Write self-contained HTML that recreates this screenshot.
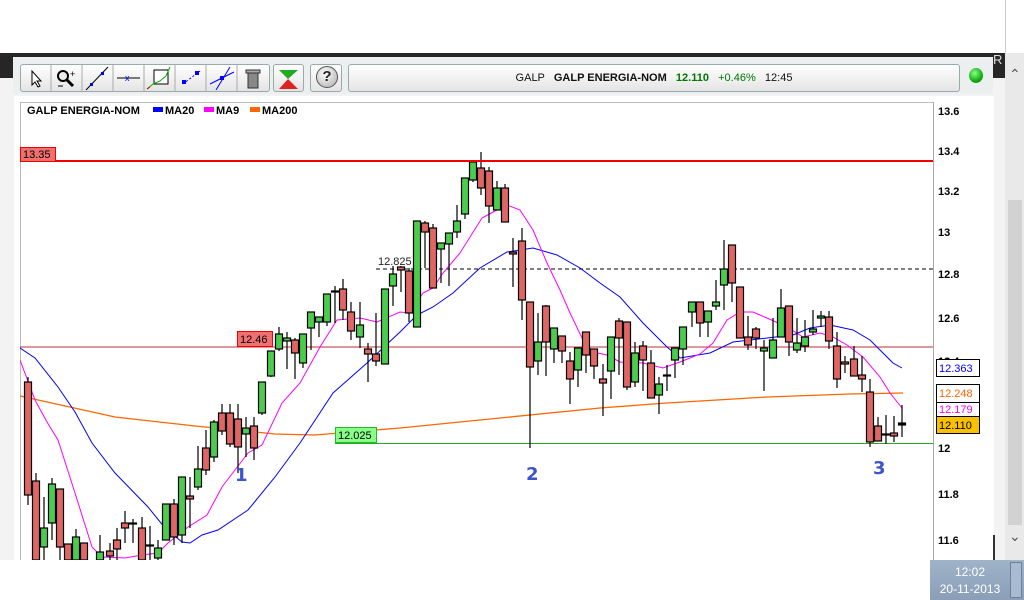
<!DOCTYPE html>
<html><head><meta charset="utf-8"><style>
*{margin:0;padding:0;box-sizing:border-box}
body{width:1024px;height:600px;overflow:hidden;background:#fff;position:relative;font-family:"Liberation Sans",sans-serif}
.abs{position:absolute}
.btn{position:absolute;top:64px;height:28px;background:linear-gradient(#fff,#e4e4e4);border:1px solid #9aa;border-radius:3px}
</style></head><body>
<div class="abs" style="left:1005px;top:0;width:19px;height:53px;background:#fff;border-left:1px solid #ccc"></div>
<div class="abs" style="left:0;top:53px;width:1005px;height:25px;background:#262626"></div>
<div class="abs" style="left:993px;top:52px;font-size:13px;color:#ddd">R</div>
<div class="abs" style="left:0;top:78px;width:1005px;height:482px;background:#f3f3f3"></div>
<div class="abs" style="left:1005px;top:53px;width:19px;height:507px;background:#e9e9e9"></div>
<div class="abs" style="left:1008px;top:200px;width:14px;height:325px;background:#d2d2d2"></div>
<div class="abs" style="left:1009px;top:66px;font-size:14px;color:#555">&#8963;</div>
<div class="abs" style="left:1009px;top:528px;font-size:14px;color:#555">&#8964;</div>
<div class="abs" style="left:13px;top:57px;width:980px;height:37px;background:#eceff0"></div>
<div class="btn" style="left:20px;width:250px;"></div>
<svg class="abs" style="left:20px;top:64px" width="250" height="28">
<g stroke="#aaa"><line x1="31" y1="1" x2="31" y2="27"/><line x1="62" y1="1" x2="62" y2="27"/><line x1="93" y1="1" x2="93" y2="27"/><line x1="124" y1="1" x2="124" y2="27"/><line x1="155" y1="1" x2="155" y2="27"/><line x1="186" y1="1" x2="186" y2="27"/><line x1="217" y1="1" x2="217" y2="27"/></g>
<path d="M12 7 L12 21 L15 18 L18 23 L20 22 L17 17 L21 17 Z" fill="#fff" stroke="#000"/>
<circle cx="43" cy="12" r="5" fill="#eee" stroke="#000" stroke-width="2"/><line x1="47" y1="16" x2="53" y2="22" stroke="#000" stroke-width="3"/><text x="50" y="13" font-size="9">+</text><line x1="38" y1="22" x2="43" y2="22" stroke="#000"/>
<line x1="66" y1="26" x2="88" y2="3" stroke="#000"/><rect x="70" y="19" width="3" height="3" fill="#00f"/><rect x="81" y="8" width="3" height="3" fill="#00f"/>
<line x1="97" y1="14" x2="120" y2="14" stroke="#000"/><text x="105" y="17" font-size="9" fill="#00f">x</text>
<rect x="134" y="6" width="14" height="14" fill="#fff" stroke="#000"/><path d="M127 25 L133 20 L140 17 L146 12 L150 3" stroke="#0a0" fill="none"/><path d="M127 25 L130 23" stroke="#d00"/>
<rect x="162" y="16" width="4" height="4" fill="#00f"/><rect x="175" y="7" width="4" height="4" fill="#00f"/><line x1="163" y1="20" x2="180" y2="7" stroke="#00f" stroke-dasharray="2 2"/>
<line x1="196" y1="26" x2="210" y2="3" stroke="#00f"/><line x1="190" y1="20" x2="214" y2="8" stroke="#00f"/><rect x="200" y="12" width="4" height="4" fill="#00f"/>
<rect x="228" y="9" width="10" height="15" fill="#888" stroke="#333"/><rect x="226" y="6" width="14" height="3" fill="#aaa" stroke="#333"/>
</svg>
<div class="btn" style="left:273px;width:31px"></div>
<svg class="abs" style="left:273px;top:64px" width="31" height="28"><path d="M6 6 L25 6 L15 15 Z" fill="#2a2"/><path d="M6 25 L25 25 L15 15 Z" fill="#d22"/></svg>
<div class="btn" style="left:310px;width:32px"></div>
<div class="abs" style="left:316px;top:66px;width:22px;height:22px;border-radius:50%;background:radial-gradient(circle at 40% 35%,#fff,#aaa);border:1px solid #555;font-size:15px;font-weight:bold;text-align:center;line-height:20px;color:#222">?</div>
<div class="btn" style="left:348px;width:612px;font-size:11px;text-align:center;line-height:26px;color:#111">GALP &nbsp; <b>GALP ENERGIA-NOM</b> &nbsp; <b style="color:#070">12.110</b> &nbsp; <span style="color:#070">+0.46%</span> &nbsp; 12:45</div>
<div class="abs" style="left:969px;top:68px;width:14px;height:15px;border-radius:50%;background:radial-gradient(circle at 40% 35%,#8f8,#1a1 60%,#070)"></div>
<div class="abs" style="left:14px;top:96px;width:980px;height:464px;background:#fff"></div>
<svg class="abs" style="left:0;top:0" width="1005" height="560">
<defs><clipPath id="c"><rect x="20" y="102" width="913" height="458"/></clipPath></defs>
<line x1="20.5" y1="102" x2="20.5" y2="560" stroke="#bbb"/><line x1="20" y1="102.5" x2="933" y2="102.5" stroke="#bbb"/><line x1="933.5" y1="102" x2="933.5" y2="560" stroke="#aaa"/>
<text x="27" y="114" font-size="11" font-weight="bold">GALP ENERGIA-NOM</text>
<rect x="153" y="107" width="10" height="5" fill="#00f"/><text x="165" y="114" font-size="11" font-weight="bold">MA20</text>
<rect x="204" y="107" width="10" height="5" fill="#f0f"/><text x="216" y="114" font-size="11" font-weight="bold">MA9</text>
<rect x="250" y="107" width="10" height="5" fill="#f60"/><text x="262" y="114" font-size="11" font-weight="bold">MA200</text>
<g font-size="11" font-weight="bold"><text x="938" y="115">13.6</text><text x="938" y="155">13.4</text><text x="938" y="195">13.2</text><text x="938" y="236">13</text><text x="938" y="278">12.8</text><text x="938" y="322">12.6</text><text x="938" y="365">12.4</text><text x="938" y="452">12</text><text x="938" y="498">11.8</text><text x="938" y="544">11.6</text></g>
<g clip-path="url(#c)">
<line x1="20" y1="347" x2="933" y2="347" stroke="#b33"/>
<line x1="376" y1="269" x2="933" y2="269" stroke="#000" stroke-dasharray="4 3"/>
<line x1="335" y1="443.5" x2="933" y2="443.5" stroke="#2a2"/>
<polyline fill="none" stroke="#f60" stroke-width="1.3" points="20,396 115,417 195,426 275,434 315,435 400,428 500,418 600,408 667,403 767,397 850,394 903,393"/>
<polyline fill="none" stroke="#00f" points="20,348 35,358 58,387 75,412 92,443 115,473 148,507 165,528 182,542 190,543 202,535 218,530 248,510 275,477 300,443 333,393 367,363 400,332 417,315 433,307 453,293 480,268 507,252 533,248 557,255 580,268 600,283 620,297 643,323 667,347 680,358 710,353 733,342 767,338 793,335 810,328 830,325 853,330 870,340 893,363 902,368"/>
<polyline fill="none" stroke="#f0f" points="20,360 35,400 47,422 58,440 75,493 92,547 102,557 125,558 142,555 158,553 168,543 188,527 207,515 222,487 248,453 262,445 282,403 300,383 320,347 337,320 360,318 377,322 400,312 410,313 423,293 433,288 443,273 460,253 482,218 493,212 507,205 520,210 533,230 547,263 560,290 570,313 583,340 593,352 607,355 620,362 643,363 663,368 680,362 700,354 713,343 727,320 740,312 753,312 767,318 787,327 803,337 820,333 833,337 847,345 863,357 880,377 890,393 902,408"/>
<g stroke="#000" stroke-width="1.2">
<line x1="28" y1="377" x2="28" y2="505"/><rect x="24.5" y="382" width="7" height="113" fill="#e06666"/>
<line x1="36" y1="473" x2="36" y2="560"/><rect x="32.5" y="481" width="7" height="79" fill="#e06666"/>
<line x1="44" y1="497" x2="44" y2="560"/><rect x="40.5" y="528" width="7" height="19" fill="#4ccc4c"/>
<line x1="52" y1="478" x2="52" y2="540"/><rect x="48.5" y="484" width="7" height="39" fill="#4ccc4c"/>
<line x1="60" y1="489" x2="60" y2="560"/><rect x="56.5" y="489" width="7" height="58" fill="#e06666"/>
<line x1="68" y1="544" x2="68" y2="560"/><rect x="64.5" y="544" width="7" height="16" fill="#e06666"/>
<line x1="76" y1="529" x2="76" y2="560"/><rect x="72.5" y="537" width="7" height="23" fill="#4ccc4c"/>
<line x1="84" y1="543" x2="84" y2="560"/><rect x="80.5" y="543" width="7" height="17" fill="#e06666"/>
<line x1="100" y1="535" x2="100" y2="560"/><rect x="96.5" y="552" width="7" height="8" fill="#4ccc4c"/>
<line x1="110" y1="543" x2="110" y2="560"/><rect x="106.5" y="551" width="7" height="5" fill="#e06666"/>
<line x1="117" y1="528" x2="117" y2="560"/><rect x="113.5" y="540" width="7" height="9" fill="#e06666"/>
<line x1="125" y1="511" x2="125" y2="543"/><rect x="121.5" y="523" width="7" height="5" fill="#e06666"/>
<line x1="133" y1="519" x2="133" y2="543"/><rect x="129.5" y="523" width="7" height="1" fill="#000"/>
<line x1="142" y1="517" x2="142" y2="560"/><rect x="138.5" y="528" width="7" height="32" fill="#e06666"/>
<line x1="150" y1="526" x2="150" y2="560"/><rect x="146.5" y="545" width="7" height="1" fill="#000"/>
<line x1="158" y1="540" x2="158" y2="560"/><rect x="154.5" y="548" width="7" height="10" fill="#4ccc4c"/>
<line x1="166" y1="504" x2="166" y2="540"/><rect x="162.5" y="504" width="7" height="36" fill="#4ccc4c"/>
<line x1="174" y1="499" x2="174" y2="545"/><rect x="170.5" y="504" width="7" height="33" fill="#e06666"/>
<line x1="182" y1="477" x2="182" y2="543"/><rect x="178.5" y="477" width="7" height="58" fill="#4ccc4c"/>
<line x1="190" y1="477" x2="190" y2="528"/><rect x="186.5" y="496" width="7" height="3" fill="#e06666"/>
<line x1="198" y1="446" x2="198" y2="490"/><rect x="194.5" y="469" width="7" height="18" fill="#4ccc4c"/>
<line x1="206" y1="430" x2="206" y2="475"/><rect x="202.5" y="448" width="7" height="22" fill="#e06666"/>
<line x1="214" y1="420" x2="214" y2="462"/><rect x="210.5" y="422" width="7" height="35" fill="#4ccc4c"/>
<line x1="222" y1="404" x2="222" y2="435"/><rect x="218.5" y="413" width="7" height="18" fill="#e06666"/>
<line x1="230" y1="404" x2="230" y2="447"/><rect x="226.5" y="413" width="7" height="31" fill="#e06666"/>
<line x1="238" y1="404" x2="238" y2="473"/><rect x="234.5" y="419" width="7" height="28" fill="#e06666"/>
<line x1="246" y1="417" x2="246" y2="457"/><rect x="242.5" y="428" width="7" height="6" fill="#4ccc4c"/>
<line x1="254" y1="417" x2="254" y2="460"/><rect x="250.5" y="426" width="7" height="22" fill="#e06666"/>
<line x1="262" y1="382" x2="262" y2="415"/><rect x="258.5" y="382" width="7" height="31" fill="#4ccc4c"/>
<line x1="271" y1="351" x2="271" y2="377"/><rect x="267.5" y="351" width="7" height="25" fill="#4ccc4c"/>
<line x1="279" y1="327" x2="279" y2="351"/><rect x="275.5" y="334" width="7" height="15" fill="#4ccc4c"/>
<line x1="287" y1="332" x2="287" y2="369"/><rect x="283.5" y="338" width="7" height="3" fill="#4ccc4c"/>
<line x1="295" y1="338" x2="295" y2="379"/><rect x="291.5" y="340" width="7" height="13" fill="#e06666"/>
<line x1="303" y1="334" x2="303" y2="368"/><rect x="299.5" y="334" width="7" height="29" fill="#4ccc4c"/>
<line x1="311" y1="312" x2="311" y2="350"/><rect x="307.5" y="312" width="7" height="16" fill="#4ccc4c"/>
<line x1="319" y1="317" x2="319" y2="337"/><rect x="315.5" y="317" width="7" height="5" fill="#4ccc4c"/>
<line x1="327" y1="294" x2="327" y2="326"/><rect x="323.5" y="294" width="7" height="28" fill="#4ccc4c"/>
<line x1="335" y1="286" x2="335" y2="323"/><rect x="331.5" y="291" width="7" height="1" fill="#000"/>
<line x1="343" y1="279" x2="343" y2="320"/><rect x="339.5" y="289" width="7" height="21" fill="#e06666"/>
<line x1="351" y1="302" x2="351" y2="340"/><rect x="347.5" y="312" width="7" height="19" fill="#e06666"/>
<line x1="360" y1="302" x2="360" y2="348"/><rect x="356.5" y="325" width="7" height="12" fill="#4ccc4c"/>
<line x1="368" y1="343" x2="368" y2="382"/><rect x="364.5" y="349" width="7" height="5" fill="#e06666"/>
<line x1="376" y1="313" x2="376" y2="366"/><rect x="372.5" y="354" width="7" height="7" fill="#e06666"/>
<line x1="385" y1="289" x2="385" y2="364"/><rect x="381.5" y="289" width="7" height="75" fill="#4ccc4c"/>
<line x1="393" y1="266" x2="393" y2="306"/><rect x="389.5" y="274" width="7" height="12" fill="#4ccc4c"/>
<line x1="401" y1="266" x2="401" y2="292"/><rect x="397.5" y="267" width="7" height="3" fill="#e06666"/>
<line x1="409" y1="268" x2="409" y2="322"/><rect x="405.5" y="271" width="7" height="42" fill="#e06666"/>
<line x1="417" y1="221" x2="417" y2="327"/><rect x="413.5" y="221" width="7" height="106" fill="#4ccc4c"/>
<line x1="425" y1="221" x2="425" y2="268"/><rect x="421.5" y="223" width="7" height="9" fill="#e06666"/>
<line x1="433" y1="224" x2="433" y2="288"/><rect x="429.5" y="228" width="7" height="60" fill="#e06666"/>
<line x1="441" y1="243" x2="441" y2="283"/><rect x="437.5" y="243" width="7" height="6" fill="#4ccc4c"/>
<line x1="449" y1="233" x2="449" y2="286"/><rect x="445.5" y="233" width="7" height="11" fill="#4ccc4c"/>
<line x1="457" y1="205" x2="457" y2="238"/><rect x="453.5" y="221" width="7" height="11" fill="#4ccc4c"/>
<line x1="465" y1="178" x2="465" y2="219"/><rect x="461.5" y="178" width="7" height="36" fill="#4ccc4c"/>
<line x1="473" y1="162" x2="473" y2="182"/><rect x="469.5" y="162" width="7" height="18" fill="#4ccc4c"/>
<line x1="481" y1="152" x2="481" y2="195"/><rect x="477.5" y="168" width="7" height="20" fill="#e06666"/>
<line x1="489" y1="167" x2="489" y2="223"/><rect x="485.5" y="171" width="7" height="35" fill="#e06666"/>
<line x1="497" y1="181" x2="497" y2="210"/><rect x="493.5" y="188" width="7" height="22" fill="#4ccc4c"/>
<line x1="505" y1="184" x2="505" y2="222"/><rect x="501.5" y="188" width="7" height="34" fill="#e06666"/>
<line x1="513" y1="238" x2="513" y2="287"/><rect x="509.5" y="252" width="7" height="2" fill="#e06666"/>
<line x1="522" y1="228" x2="522" y2="320"/><rect x="518.5" y="241" width="7" height="59" fill="#e06666"/>
<line x1="530" y1="302" x2="530" y2="448"/><rect x="526.5" y="302" width="7" height="65" fill="#e06666"/>
<line x1="538" y1="313" x2="538" y2="375"/><rect x="534.5" y="342" width="7" height="19" fill="#4ccc4c"/>
<line x1="546" y1="305" x2="546" y2="376"/><rect x="542.5" y="306" width="7" height="36" fill="#e06666"/>
<line x1="554" y1="328" x2="554" y2="363"/><rect x="550.5" y="328" width="7" height="21" fill="#4ccc4c"/>
<line x1="562" y1="336" x2="562" y2="363"/><rect x="558.5" y="336" width="7" height="15" fill="#e06666"/>
<line x1="570" y1="352" x2="570" y2="404"/><rect x="566.5" y="361" width="7" height="18" fill="#e06666"/>
<line x1="578" y1="348" x2="578" y2="387"/><rect x="574.5" y="348" width="7" height="22" fill="#4ccc4c"/>
<line x1="586" y1="332" x2="586" y2="373"/><rect x="582.5" y="332" width="7" height="23" fill="#e06666"/>
<line x1="594" y1="349" x2="594" y2="379"/><rect x="590.5" y="349" width="7" height="17" fill="#e06666"/>
<line x1="603" y1="364" x2="603" y2="416"/><rect x="599.5" y="379" width="7" height="4" fill="#e06666"/>
<line x1="611" y1="337" x2="611" y2="399"/><rect x="607.5" y="337" width="7" height="34" fill="#4ccc4c"/>
<line x1="619" y1="318" x2="619" y2="375"/><rect x="615.5" y="321" width="7" height="17" fill="#e06666"/>
<line x1="627" y1="322" x2="627" y2="390"/><rect x="623.5" y="322" width="7" height="65" fill="#e06666"/>
<line x1="635" y1="342" x2="635" y2="387"/><rect x="631.5" y="353" width="7" height="29" fill="#4ccc4c"/>
<line x1="643" y1="341" x2="643" y2="391"/><rect x="639.5" y="346" width="7" height="14" fill="#e06666"/>
<line x1="651" y1="350" x2="651" y2="398"/><rect x="647.5" y="363" width="7" height="35" fill="#e06666"/>
<line x1="659" y1="377" x2="659" y2="414"/><rect x="655.5" y="384" width="7" height="11" fill="#4ccc4c"/>
<line x1="667" y1="365" x2="667" y2="391"/><rect x="663.5" y="375" width="7" height="1" fill="#000"/>
<line x1="675" y1="348" x2="675" y2="378"/><rect x="671.5" y="348" width="7" height="12" fill="#4ccc4c"/>
<line x1="683" y1="327" x2="683" y2="365"/><rect x="679.5" y="327" width="7" height="22" fill="#4ccc4c"/>
<line x1="692" y1="302" x2="692" y2="327"/><rect x="688.5" y="302" width="7" height="10" fill="#4ccc4c"/>
<line x1="700" y1="302" x2="700" y2="337"/><rect x="696.5" y="302" width="7" height="21" fill="#e06666"/>
<line x1="708" y1="311" x2="708" y2="337"/><rect x="704.5" y="311" width="7" height="11" fill="#4ccc4c"/>
<line x1="716" y1="280" x2="716" y2="310"/><rect x="712.5" y="302" width="7" height="4" fill="#4ccc4c"/>
<line x1="724" y1="240" x2="724" y2="310"/><rect x="720.5" y="269" width="7" height="16" fill="#4ccc4c"/>
<line x1="732" y1="245" x2="732" y2="302"/><rect x="728.5" y="245" width="7" height="38" fill="#e06666"/>
<line x1="740" y1="287" x2="740" y2="338"/><rect x="736.5" y="287" width="7" height="51" fill="#e06666"/>
<line x1="748" y1="316" x2="748" y2="350"/><rect x="744.5" y="337" width="7" height="8" fill="#e06666"/>
<line x1="756" y1="327" x2="756" y2="349"/><rect x="752.5" y="329" width="7" height="9" fill="#e06666"/>
<line x1="764" y1="340" x2="764" y2="391"/><rect x="760.5" y="348" width="7" height="3" fill="#4ccc4c"/>
<line x1="773" y1="318" x2="773" y2="358"/><rect x="769.5" y="340" width="7" height="18" fill="#4ccc4c"/>
<line x1="781" y1="289" x2="781" y2="337"/><rect x="777.5" y="308" width="7" height="29" fill="#4ccc4c"/>
<line x1="789" y1="306" x2="789" y2="356"/><rect x="785.5" y="306" width="7" height="36" fill="#e06666"/>
<line x1="797" y1="318" x2="797" y2="353"/><rect x="793.5" y="343" width="7" height="7" fill="#4ccc4c"/>
<line x1="805" y1="320" x2="805" y2="352"/><rect x="801.5" y="337" width="7" height="9" fill="#4ccc4c"/>
<line x1="813" y1="310" x2="813" y2="335"/><rect x="809.5" y="329" width="7" height="3" fill="#4ccc4c"/>
<line x1="821" y1="311" x2="821" y2="327"/><rect x="817.5" y="316" width="7" height="2" fill="#4ccc4c"/>
<line x1="829" y1="311" x2="829" y2="349"/><rect x="825.5" y="317" width="7" height="24" fill="#e06666"/>
<line x1="837" y1="332" x2="837" y2="388"/><rect x="833.5" y="346" width="7" height="33" fill="#e06666"/>
<line x1="845" y1="356" x2="845" y2="373"/><rect x="841.5" y="362" width="7" height="2" fill="#e06666"/>
<line x1="854" y1="346" x2="854" y2="376"/><rect x="850.5" y="359" width="7" height="17" fill="#e06666"/>
<line x1="862" y1="356" x2="862" y2="392"/><rect x="858.5" y="375" width="7" height="4" fill="#e06666"/>
<line x1="870" y1="379" x2="870" y2="447"/><rect x="866.5" y="392" width="7" height="50" fill="#e06666"/>
<line x1="878" y1="417" x2="878" y2="441"/><rect x="874.5" y="426" width="7" height="15" fill="#e06666"/>
<line x1="886" y1="415" x2="886" y2="444"/><rect x="882.5" y="434" width="7" height="1" fill="#000"/>
<line x1="894" y1="416" x2="894" y2="442"/><rect x="890.5" y="433" width="7" height="3" fill="#e06666"/>
<line x1="902" y1="405" x2="902" y2="437"/><rect x="898.5" y="423" width="7" height="2" fill="#000"/>
</g>
<line x1="20" y1="161" x2="933" y2="161" stroke="#e00" stroke-width="2"/>
<rect x="20.5" y="147.5" width="35" height="14" fill="#f07070" stroke="#e00"/><text x="23" y="158" font-size="11">13.35</text>
<rect x="237.5" y="331.5" width="35" height="15" fill="#f07070" stroke="#e00"/><text x="240" y="343" font-size="11">12.46</text>
<text x="378" y="265" font-size="11" fill="#222">12.825</text>
<rect x="335.5" y="427.5" width="41" height="15" fill="#8f8" stroke="#2b2"/><text x="338" y="439" font-size="11">12.025</text>
<g font-size="18" font-weight="bold" fill="#3d55cc" font-family="DejaVu Sans,sans-serif"><text x="235" y="481">1</text><text x="526" y="480">2</text><text x="873" y="474">3</text></g>
</g>
<g font-size="11"><rect x="936.5" y="359.5" width="43" height="17" fill="#fff" stroke="#000"/><text x="939" y="372" fill="#00f">12.363</text>
<rect x="936.5" y="384.5" width="43" height="18" fill="#fff" stroke="#000"/><text x="939" y="397" fill="#f60">12.248</text>
<rect x="936.5" y="402.5" width="43" height="14" fill="#fff" stroke="#000"/><text x="939" y="413" fill="#f0f">12.179</text>
<rect x="936.5" y="416.5" width="43" height="17" fill="#f9c000" stroke="#000"/><text x="939" y="429">12.110</text></g>
<line x1="994" y1="535" x2="994" y2="560" stroke="#333" stroke-width="2"/>
</svg>
<div class="abs" style="left:930px;top:560px;width:94px;height:40px;background:linear-gradient(#9fb3c9,#8a9fb7);color:#fff;font-size:12px;text-align:center;line-height:17px;padding-top:4px;padding-right:14px">12:02<br>20-11-2013</div>
<div class="abs" style="left:1010px;top:562px;width:12px;height:36px;background:#a9bbd0;border:1px solid #6d819a"></div>
</body></html>
